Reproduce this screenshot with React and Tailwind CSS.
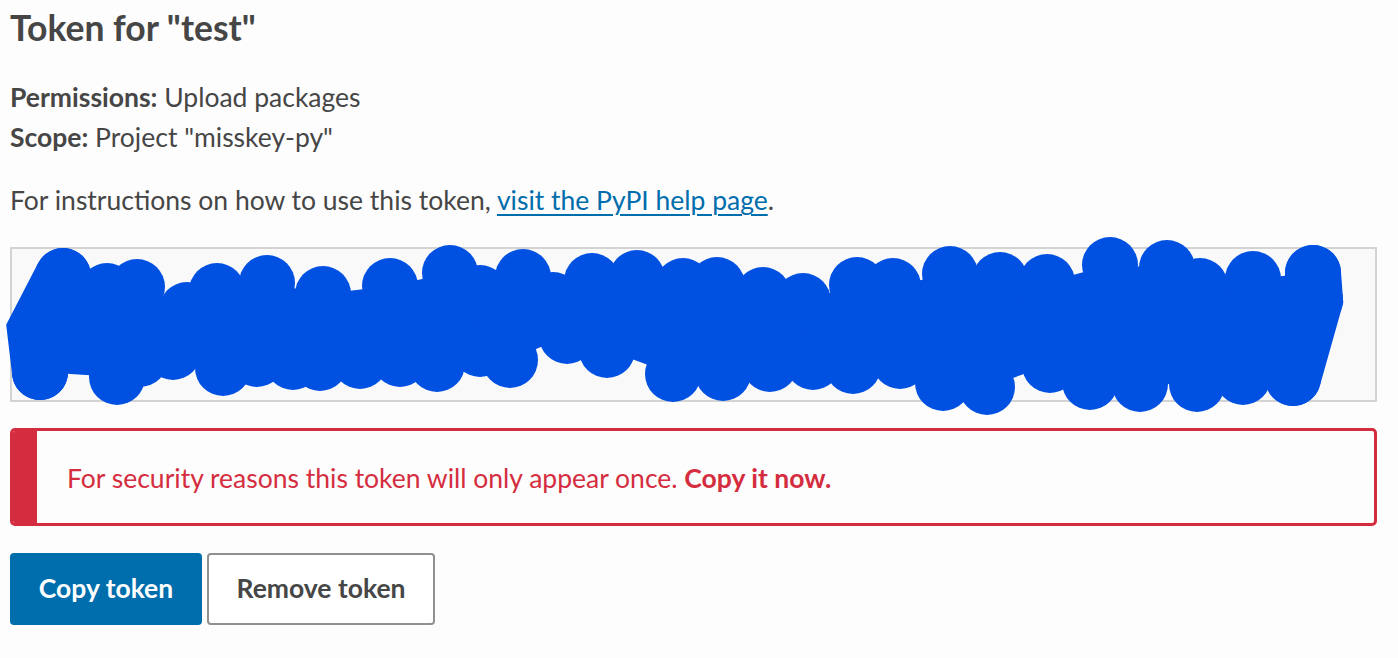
import React from "react";

const TOP = [
  [63, 248], [107, 263], [137, 259], [187, 282], [217, 263], [267, 255],
  [323, 266], [390, 258], [450, 245], [480, 265], [523, 249], [553, 272],
  [592, 253], [637, 250], [683, 258], [717, 257], [763, 267], [803, 273],
  [857, 257], [893, 258], [950, 246], [1000, 252], [1047, 254], [1110, 237],
  [1167, 240], [1200, 258], [1253, 251], [1313, 245],
];
const BOT = [
  [1293, 406], [1243, 405], [1197, 412], [1140, 412], [1090, 410], [1050, 393],
  [987, 415], [943, 411], [900, 389], [853, 394], [813, 390], [770, 392],
  [723, 401], [673, 402], [607, 378], [567, 364], [510, 388], [480, 377],
  [437, 392], [400, 387], [360, 389], [320, 391], [293, 390], [257, 387],
  [223, 396], [173, 380], [140, 387], [117, 405], [40, 400],
];
const R = 28;

function Scribble() {
  const topC = TOP.map(([x, y]) => [x, y + R]);
  const botC = BOT.map(([x, y]) => [x, y - R]);
  const poly = [[35, 330], ...topC, [1315, 300], ...botC, [40, 372]];
  const d = "M" + poly.map((p) => p.join(",")).join(" L") + " Z";
  return (
    <svg
      className="absolute left-0 top-0 pointer-events-none"
      width="1398"
      height="658"
      viewBox="0 0 1398 658"
    >
      <g fill="#0050e1" stroke="none">
        <path d={d} />
        {[...topC, ...botC].map(([x, y], i) => (
          <circle key={i} cx={x} cy={y} r={R} />
        ))}
        <circle cx={35} cy={330} r={27} />
        <circle cx={40} cy={372} r={28} />
        <circle cx={1315} cy={300} r={28} />
      </g>
      <g stroke="#0050e1" strokeWidth={56} strokeLinecap="round" fill="none">
        <path d="M63,276 L35,330 L40,372" />
        <path d="M1313,273 L1315,300 L1293,378" />
      </g>
    </svg>
  );
}

export default function App() {
  return (
    <div className="relative min-h-screen bg-[#fdfdfd] font-['Lato',sans-serif] text-[#464646] pl-[10px] pr-[21px]">
      <h2 className="pt-[6px] text-[35.5px] leading-[44px] font-bold">Token for "test"</h2>
      <div className="mt-[27px] text-[26.5px] leading-[40px]">
        <div>
          <span className="font-bold">Permissions:</span> Upload packages
        </div>
        <div>
          <span className="font-bold">Scope:</span> Project "misskey-py"
        </div>
      </div>
      <p className="mt-[23px] text-[26.5px] leading-[40px]">
        For instructions on how to use this token,{" "}
        <a href="#" className="text-[#006dad] underline decoration-[2px] underline-offset-[4px]">
          visit the PyPI help page
        </a>
        .
      </p>
      <div className="mt-[27px] h-[155px] border-2 border-[#d3d3d3] bg-[#f9f9f9]" />
      <div className="mt-[26px] flex h-[98px] rounded-[5px] border-[3px] border-[#d52d40] bg-[#fdfdfd] overflow-hidden">
        <div className="w-[24px] bg-[#d52d40]" />
        <div className="flex items-center pl-[30px] pt-[3px] text-[26.5px] text-[#d52d40]">
          <span>
            For security reasons this token will only appear once.{" "}
            <span className="font-bold">Copy it now.</span>
          </span>
        </div>
      </div>
      <div className="mt-[27px] flex gap-[5px]">
        <button className="h-[72px] w-[192px] rounded-[4px] bg-[#006dad] text-[26.5px] font-bold text-white">
          Copy token
        </button>
        <button className="h-[72px] w-[228px] rounded-[4px] border-2 border-[#909090] bg-white text-[26.5px] font-bold text-[#464646]">
          Remove token
        </button>
      </div>
      <Scribble />
    </div>
  );
}
